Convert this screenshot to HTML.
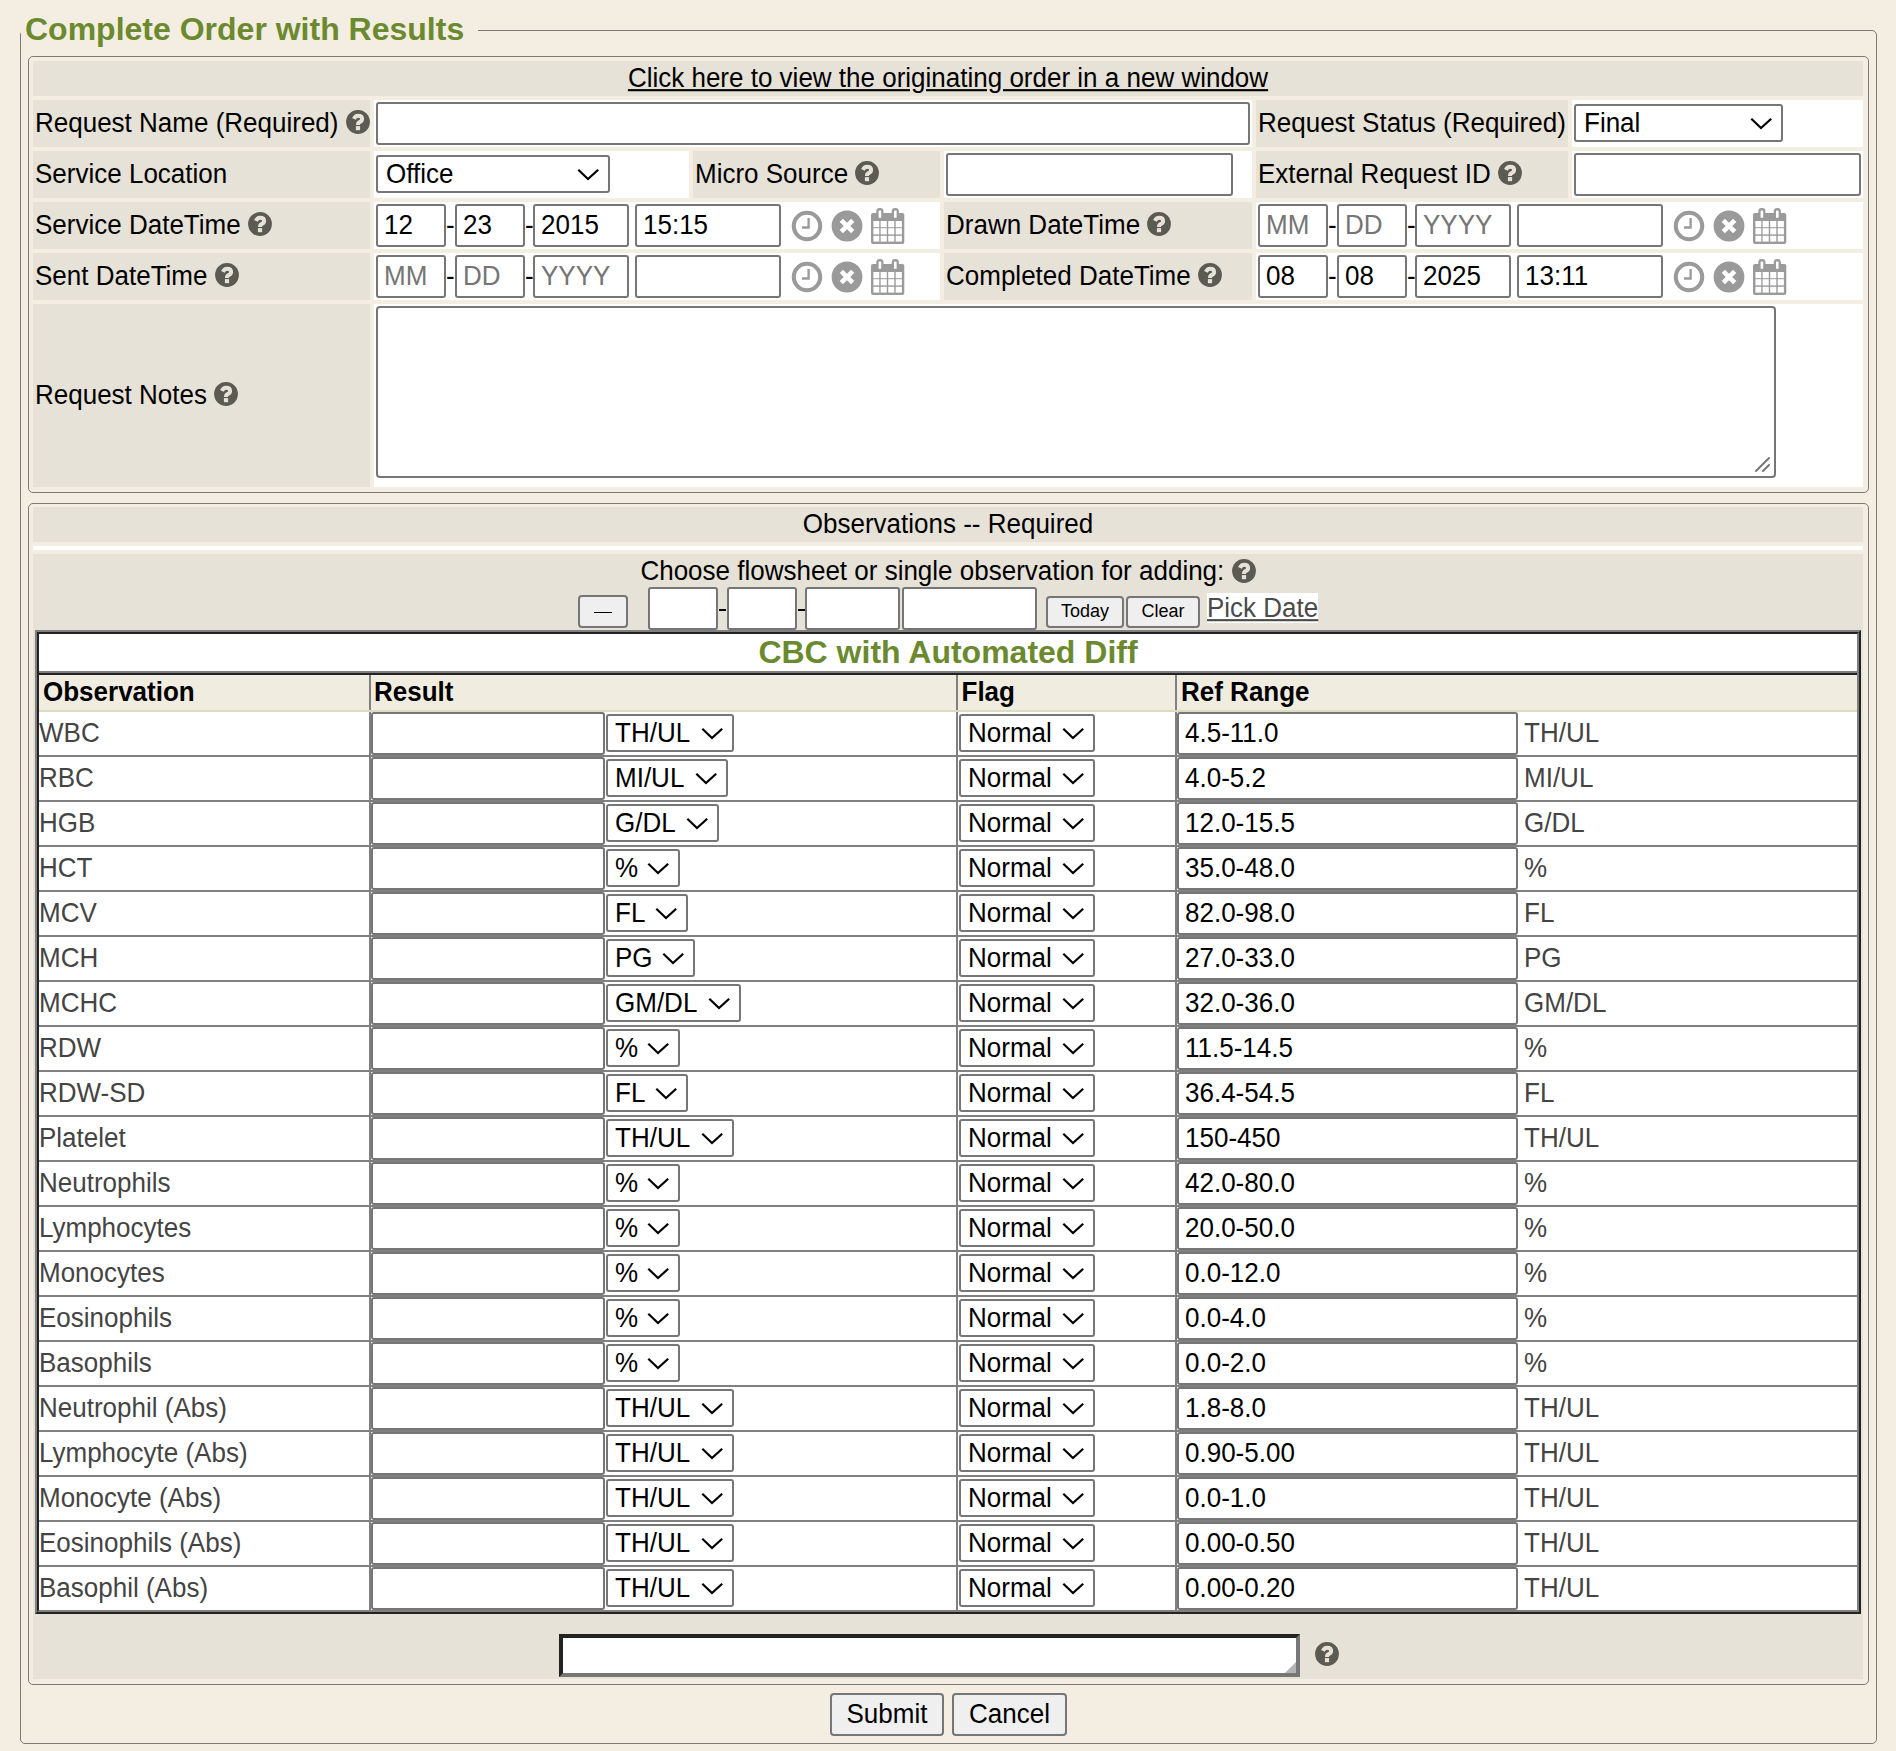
<!DOCTYPE html>
<html><head><meta charset="utf-8"><title>Complete Order with Results</title>
<style>
html,body{margin:0;padding:0;}
body{width:1896px;height:1751px;overflow:hidden;background:#f4eee2;position:relative;font-family:"Liberation Sans",sans-serif;font-size:26px;color:#000;}
body>div,body>svg{position:absolute;}
.t{white-space:nowrap;line-height:normal;}
.s{transform:scaleY(1.06);transform-origin:0 24px;}
</style></head><body>
<div style="left:20px;top:30px;width:1857px;height:1714px;box-sizing:border-box;border:1px solid #7a7a7a;border-radius:5px"></div>
<div style="left:21px;top:0px;width:457px;height:34px;background:#f4eee2"></div>
<div class="t" style="left:25px;top:11px;font-size:32px;font-weight:bold;color:#6b8a2f;">Complete Order with Results</div>
<div style="left:28px;top:56px;width:1841px;height:437px;box-sizing:border-box;border:1px solid #7a7a7a;border-radius:5px"></div>
<div style="left:33px;top:61px;width:1830px;height:35px;background:#e6e2d7"></div>
<div class="t s" style="left:33px;width:1830px;text-align:center;top:63px;text-decoration:underline">Click here to view the originating order in a new window</div>
<div style="left:33px;top:100px;width:337px;height:47px;background:#e6e2d7"></div>
<div class="t s" style="left:35px;top:108px;">Request Name (Required)</div>
<svg style="left:345.69000000000005px;top:109.9px" width="24" height="24" viewBox="0 0 24 24"><circle cx="12" cy="12" r="11.9" fill="#5b5a53"/><path d="M7.9 8.9 Q9.3 5.8 12.1 5.8 Q16.1 5.8 16.1 9.0 Q16.1 11.1 13.6 12.2 Q12 12.9 12 15.0" fill="none" stroke="#e6e2d7" stroke-width="4.0"/><rect x="9.9" y="16.1" width="4.2" height="4.1" fill="#e6e2d7"/></svg>
<div style="left:374px;top:100px;width:878px;height:47px;background:#fff"></div>
<div style="left:376px;top:102px;width:874px;height:43px;box-sizing:border-box;border:2px solid #767676;border-radius:3px;background:#fff"></div>
<div style="left:1256px;top:100px;width:312px;height:47px;background:#e6e2d7"></div>
<div class="t s" style="left:1258px;top:108px;">Request Status (Required)</div>
<div style="left:1572px;top:100px;width:291px;height:47px;background:#fff"></div>
<div style="left:1574px;top:104px;width:209px;height:38px;box-sizing:border-box;border:2px solid #767676;border-radius:3px;background:#fff"></div>
<div class="t s" style="left:1584px;top:108px;">Final</div>
<svg style="left:1747px;top:113.0px" width="30" height="20"><polyline points="4.300000000000001,5.8 14,15.1 24.2,5.8" fill="none" stroke="#000" stroke-width="2.2"/></svg>
<div style="left:33px;top:151px;width:337px;height:47px;background:#e6e2d7"></div>
<div class="t s" style="left:35px;top:159px;">Service Location</div>
<div style="left:374px;top:151px;width:315px;height:47px;background:#fff"></div>
<div style="left:376px;top:155px;width:234px;height:38px;box-sizing:border-box;border:2px solid #767676;border-radius:3px;background:#fff"></div>
<div class="t s" style="left:386px;top:159px;">Office</div>
<svg style="left:574px;top:164.0px" width="30" height="20"><polyline points="4.300000000000001,5.8 14,15.1 24.2,5.8" fill="none" stroke="#000" stroke-width="2.2"/></svg>
<div style="left:693px;top:151px;width:247px;height:47px;background:#e6e2d7"></div>
<div class="t s" style="left:695px;top:159px;">Micro Source</div>
<svg style="left:855.38px;top:160.9px" width="24" height="24" viewBox="0 0 24 24"><circle cx="12" cy="12" r="11.9" fill="#5b5a53"/><path d="M7.9 8.9 Q9.3 5.8 12.1 5.8 Q16.1 5.8 16.1 9.0 Q16.1 11.1 13.6 12.2 Q12 12.9 12 15.0" fill="none" stroke="#e6e2d7" stroke-width="4.0"/><rect x="9.9" y="16.1" width="4.2" height="4.1" fill="#e6e2d7"/></svg>
<div style="left:944px;top:151px;width:308px;height:47px;background:#fff"></div>
<div style="left:946px;top:153px;width:287px;height:43px;box-sizing:border-box;border:2px solid #767676;border-radius:3px;background:#fff"></div>
<div style="left:1256px;top:151px;width:312px;height:47px;background:#e6e2d7"></div>
<div class="t s" style="left:1258px;top:159px;">External Request ID</div>
<svg style="left:1497.89px;top:160.9px" width="24" height="24" viewBox="0 0 24 24"><circle cx="12" cy="12" r="11.9" fill="#5b5a53"/><path d="M7.9 8.9 Q9.3 5.8 12.1 5.8 Q16.1 5.8 16.1 9.0 Q16.1 11.1 13.6 12.2 Q12 12.9 12 15.0" fill="none" stroke="#e6e2d7" stroke-width="4.0"/><rect x="9.9" y="16.1" width="4.2" height="4.1" fill="#e6e2d7"/></svg>
<div style="left:1572px;top:151px;width:291px;height:47px;background:#fff"></div>
<div style="left:1574px;top:153px;width:287px;height:43px;box-sizing:border-box;border:2px solid #767676;border-radius:3px;background:#fff"></div>
<div style="left:33px;top:202px;width:337px;height:47px;background:#e6e2d7"></div>
<div class="t s" style="left:35px;top:210px;">Service DateTime</div>
<svg style="left:247.88px;top:211.9px" width="24" height="24" viewBox="0 0 24 24"><circle cx="12" cy="12" r="11.9" fill="#5b5a53"/><path d="M7.9 8.9 Q9.3 5.8 12.1 5.8 Q16.1 5.8 16.1 9.0 Q16.1 11.1 13.6 12.2 Q12 12.9 12 15.0" fill="none" stroke="#e6e2d7" stroke-width="4.0"/><rect x="9.9" y="16.1" width="4.2" height="4.1" fill="#e6e2d7"/></svg>
<div style="left:374px;top:202px;width:566px;height:47px;background:#fff"></div>
<div style="left:376px;top:204px;width:70px;height:43px;box-sizing:border-box;border:2px solid #767676;border-radius:3px;background:#fff"></div>
<div class="t s" style="left:384px;top:210px;">12</div>
<div style="left:455px;top:204px;width:70px;height:43px;box-sizing:border-box;border:2px solid #767676;border-radius:3px;background:#fff"></div>
<div class="t s" style="left:463px;top:210px;">23</div>
<div style="left:533px;top:204px;width:96px;height:43px;box-sizing:border-box;border:2px solid #767676;border-radius:3px;background:#fff"></div>
<div class="t s" style="left:541px;top:210px;">2015</div>
<div class="t s" style="left:446px;top:210px;">-</div>
<div class="t s" style="left:525px;top:210px;">-</div>
<div style="left:635px;top:204px;width:146px;height:43px;box-sizing:border-box;border:2px solid #767676;border-radius:3px;background:#fff"></div>
<div class="t s" style="left:643px;top:210px;">15:15</div>
<svg style="left:791.1px;top:210.1px" width="32" height="32" viewBox="0 0 32 32"><circle cx="16" cy="16" r="13.2" fill="none" stroke="#9a9a9a" stroke-width="4.1"/><path d="M17.6 8.1 V17.5 H11" fill="none" stroke="#9a9a9a" stroke-width="2.3"/></svg>
<svg style="left:831.4px;top:210.1px" width="32" height="32" viewBox="0 0 32 32"><circle cx="16" cy="16" r="15.4" fill="#9a9a9a"/><path d="M10.3 10.3 L21.7 21.7 M21.7 10.3 L10.3 21.7" stroke="#fff" stroke-width="4.6"/></svg>
<svg style="left:870.7px;top:207.9px" width="34" height="37" viewBox="0 0 34 37"><rect x="0" y="5" width="33.3" height="31" rx="2" fill="#9a9a9a"/><rect x="2.4" y="13" width="5.9" height="6.199999999999999" fill="#fff"/><rect x="2.4" y="20.2" width="5.9" height="6.199999999999999" fill="#fff"/><rect x="2.4" y="27.8" width="5.9" height="5.800000000000001" fill="#fff"/><rect x="9.6" y="13" width="6.200000000000001" height="6.199999999999999" fill="#fff"/><rect x="9.6" y="20.2" width="6.200000000000001" height="6.199999999999999" fill="#fff"/><rect x="9.6" y="27.8" width="6.200000000000001" height="5.800000000000001" fill="#fff"/><rect x="17.2" y="13" width="6.100000000000001" height="6.199999999999999" fill="#fff"/><rect x="17.2" y="20.2" width="6.100000000000001" height="6.199999999999999" fill="#fff"/><rect x="17.2" y="27.8" width="6.100000000000001" height="5.800000000000001" fill="#fff"/><rect x="24.7" y="13" width="6.199999999999999" height="6.199999999999999" fill="#fff"/><rect x="24.7" y="20.2" width="6.199999999999999" height="6.199999999999999" fill="#fff"/><rect x="24.7" y="27.8" width="6.199999999999999" height="5.800000000000001" fill="#fff"/><rect x="5.300000000000001" y="0" width="7.2" height="11" rx="3.4" fill="#9a9a9a"/><rect x="7.6000000000000005" y="2.6" width="2.6" height="7.2" fill="#fff"/><rect x="20.7" y="0" width="7.2" height="11" rx="3.4" fill="#9a9a9a"/><rect x="23.0" y="2.6" width="2.6" height="7.2" fill="#fff"/></svg>
<div style="left:944px;top:202px;width:308px;height:47px;background:#e6e2d7"></div>
<div class="t s" style="left:946px;top:210px;">Drawn DateTime</div>
<svg style="left:1147.31px;top:211.9px" width="24" height="24" viewBox="0 0 24 24"><circle cx="12" cy="12" r="11.9" fill="#5b5a53"/><path d="M7.9 8.9 Q9.3 5.8 12.1 5.8 Q16.1 5.8 16.1 9.0 Q16.1 11.1 13.6 12.2 Q12 12.9 12 15.0" fill="none" stroke="#e6e2d7" stroke-width="4.0"/><rect x="9.9" y="16.1" width="4.2" height="4.1" fill="#e6e2d7"/></svg>
<div style="left:1256px;top:202px;width:607px;height:47px;background:#fff"></div>
<div style="left:1258px;top:204px;width:70px;height:43px;box-sizing:border-box;border:2px solid #767676;border-radius:3px;background:#fff"></div>
<div class="t s" style="left:1266px;top:210px;color:#757575;">MM</div>
<div style="left:1337px;top:204px;width:70px;height:43px;box-sizing:border-box;border:2px solid #767676;border-radius:3px;background:#fff"></div>
<div class="t s" style="left:1345px;top:210px;color:#757575;">DD</div>
<div style="left:1415px;top:204px;width:96px;height:43px;box-sizing:border-box;border:2px solid #767676;border-radius:3px;background:#fff"></div>
<div class="t s" style="left:1423px;top:210px;color:#757575;">YYYY</div>
<div class="t s" style="left:1328px;top:210px;">-</div>
<div class="t s" style="left:1407px;top:210px;">-</div>
<div style="left:1517px;top:204px;width:146px;height:43px;box-sizing:border-box;border:2px solid #767676;border-radius:3px;background:#fff"></div>
<svg style="left:1673.1px;top:210.1px" width="32" height="32" viewBox="0 0 32 32"><circle cx="16" cy="16" r="13.2" fill="none" stroke="#9a9a9a" stroke-width="4.1"/><path d="M17.6 8.1 V17.5 H11" fill="none" stroke="#9a9a9a" stroke-width="2.3"/></svg>
<svg style="left:1713.4px;top:210.1px" width="32" height="32" viewBox="0 0 32 32"><circle cx="16" cy="16" r="15.4" fill="#9a9a9a"/><path d="M10.3 10.3 L21.7 21.7 M21.7 10.3 L10.3 21.7" stroke="#fff" stroke-width="4.6"/></svg>
<svg style="left:1752.7px;top:207.9px" width="34" height="37" viewBox="0 0 34 37"><rect x="0" y="5" width="33.3" height="31" rx="2" fill="#9a9a9a"/><rect x="2.4" y="13" width="5.9" height="6.199999999999999" fill="#fff"/><rect x="2.4" y="20.2" width="5.9" height="6.199999999999999" fill="#fff"/><rect x="2.4" y="27.8" width="5.9" height="5.800000000000001" fill="#fff"/><rect x="9.6" y="13" width="6.200000000000001" height="6.199999999999999" fill="#fff"/><rect x="9.6" y="20.2" width="6.200000000000001" height="6.199999999999999" fill="#fff"/><rect x="9.6" y="27.8" width="6.200000000000001" height="5.800000000000001" fill="#fff"/><rect x="17.2" y="13" width="6.100000000000001" height="6.199999999999999" fill="#fff"/><rect x="17.2" y="20.2" width="6.100000000000001" height="6.199999999999999" fill="#fff"/><rect x="17.2" y="27.8" width="6.100000000000001" height="5.800000000000001" fill="#fff"/><rect x="24.7" y="13" width="6.199999999999999" height="6.199999999999999" fill="#fff"/><rect x="24.7" y="20.2" width="6.199999999999999" height="6.199999999999999" fill="#fff"/><rect x="24.7" y="27.8" width="6.199999999999999" height="5.800000000000001" fill="#fff"/><rect x="5.300000000000001" y="0" width="7.2" height="11" rx="3.4" fill="#9a9a9a"/><rect x="7.6000000000000005" y="2.6" width="2.6" height="7.2" fill="#fff"/><rect x="20.7" y="0" width="7.2" height="11" rx="3.4" fill="#9a9a9a"/><rect x="23.0" y="2.6" width="2.6" height="7.2" fill="#fff"/></svg>
<div style="left:33px;top:253px;width:337px;height:47px;background:#e6e2d7"></div>
<div class="t s" style="left:35px;top:261px;">Sent DateTime</div>
<svg style="left:214.67px;top:262.9px" width="24" height="24" viewBox="0 0 24 24"><circle cx="12" cy="12" r="11.9" fill="#5b5a53"/><path d="M7.9 8.9 Q9.3 5.8 12.1 5.8 Q16.1 5.8 16.1 9.0 Q16.1 11.1 13.6 12.2 Q12 12.9 12 15.0" fill="none" stroke="#e6e2d7" stroke-width="4.0"/><rect x="9.9" y="16.1" width="4.2" height="4.1" fill="#e6e2d7"/></svg>
<div style="left:374px;top:253px;width:566px;height:47px;background:#fff"></div>
<div style="left:376px;top:255px;width:70px;height:43px;box-sizing:border-box;border:2px solid #767676;border-radius:3px;background:#fff"></div>
<div class="t s" style="left:384px;top:261px;color:#757575;">MM</div>
<div style="left:455px;top:255px;width:70px;height:43px;box-sizing:border-box;border:2px solid #767676;border-radius:3px;background:#fff"></div>
<div class="t s" style="left:463px;top:261px;color:#757575;">DD</div>
<div style="left:533px;top:255px;width:96px;height:43px;box-sizing:border-box;border:2px solid #767676;border-radius:3px;background:#fff"></div>
<div class="t s" style="left:541px;top:261px;color:#757575;">YYYY</div>
<div class="t s" style="left:446px;top:261px;">-</div>
<div class="t s" style="left:525px;top:261px;">-</div>
<div style="left:635px;top:255px;width:146px;height:43px;box-sizing:border-box;border:2px solid #767676;border-radius:3px;background:#fff"></div>
<svg style="left:791.1px;top:261.1px" width="32" height="32" viewBox="0 0 32 32"><circle cx="16" cy="16" r="13.2" fill="none" stroke="#9a9a9a" stroke-width="4.1"/><path d="M17.6 8.1 V17.5 H11" fill="none" stroke="#9a9a9a" stroke-width="2.3"/></svg>
<svg style="left:831.4px;top:261.1px" width="32" height="32" viewBox="0 0 32 32"><circle cx="16" cy="16" r="15.4" fill="#9a9a9a"/><path d="M10.3 10.3 L21.7 21.7 M21.7 10.3 L10.3 21.7" stroke="#fff" stroke-width="4.6"/></svg>
<svg style="left:870.7px;top:258.9px" width="34" height="37" viewBox="0 0 34 37"><rect x="0" y="5" width="33.3" height="31" rx="2" fill="#9a9a9a"/><rect x="2.4" y="13" width="5.9" height="6.199999999999999" fill="#fff"/><rect x="2.4" y="20.2" width="5.9" height="6.199999999999999" fill="#fff"/><rect x="2.4" y="27.8" width="5.9" height="5.800000000000001" fill="#fff"/><rect x="9.6" y="13" width="6.200000000000001" height="6.199999999999999" fill="#fff"/><rect x="9.6" y="20.2" width="6.200000000000001" height="6.199999999999999" fill="#fff"/><rect x="9.6" y="27.8" width="6.200000000000001" height="5.800000000000001" fill="#fff"/><rect x="17.2" y="13" width="6.100000000000001" height="6.199999999999999" fill="#fff"/><rect x="17.2" y="20.2" width="6.100000000000001" height="6.199999999999999" fill="#fff"/><rect x="17.2" y="27.8" width="6.100000000000001" height="5.800000000000001" fill="#fff"/><rect x="24.7" y="13" width="6.199999999999999" height="6.199999999999999" fill="#fff"/><rect x="24.7" y="20.2" width="6.199999999999999" height="6.199999999999999" fill="#fff"/><rect x="24.7" y="27.8" width="6.199999999999999" height="5.800000000000001" fill="#fff"/><rect x="5.300000000000001" y="0" width="7.2" height="11" rx="3.4" fill="#9a9a9a"/><rect x="7.6000000000000005" y="2.6" width="2.6" height="7.2" fill="#fff"/><rect x="20.7" y="0" width="7.2" height="11" rx="3.4" fill="#9a9a9a"/><rect x="23.0" y="2.6" width="2.6" height="7.2" fill="#fff"/></svg>
<div style="left:944px;top:253px;width:308px;height:47px;background:#e6e2d7"></div>
<div class="t s" style="left:946px;top:261px;">Completed DateTime</div>
<svg style="left:1197.92px;top:262.9px" width="24" height="24" viewBox="0 0 24 24"><circle cx="12" cy="12" r="11.9" fill="#5b5a53"/><path d="M7.9 8.9 Q9.3 5.8 12.1 5.8 Q16.1 5.8 16.1 9.0 Q16.1 11.1 13.6 12.2 Q12 12.9 12 15.0" fill="none" stroke="#e6e2d7" stroke-width="4.0"/><rect x="9.9" y="16.1" width="4.2" height="4.1" fill="#e6e2d7"/></svg>
<div style="left:1256px;top:253px;width:607px;height:47px;background:#fff"></div>
<div style="left:1258px;top:255px;width:70px;height:43px;box-sizing:border-box;border:2px solid #767676;border-radius:3px;background:#fff"></div>
<div class="t s" style="left:1266px;top:261px;">08</div>
<div style="left:1337px;top:255px;width:70px;height:43px;box-sizing:border-box;border:2px solid #767676;border-radius:3px;background:#fff"></div>
<div class="t s" style="left:1345px;top:261px;">08</div>
<div style="left:1415px;top:255px;width:96px;height:43px;box-sizing:border-box;border:2px solid #767676;border-radius:3px;background:#fff"></div>
<div class="t s" style="left:1423px;top:261px;">2025</div>
<div class="t s" style="left:1328px;top:261px;">-</div>
<div class="t s" style="left:1407px;top:261px;">-</div>
<div style="left:1517px;top:255px;width:146px;height:43px;box-sizing:border-box;border:2px solid #767676;border-radius:3px;background:#fff"></div>
<div class="t s" style="left:1525px;top:261px;">13:11</div>
<svg style="left:1673.1px;top:261.1px" width="32" height="32" viewBox="0 0 32 32"><circle cx="16" cy="16" r="13.2" fill="none" stroke="#9a9a9a" stroke-width="4.1"/><path d="M17.6 8.1 V17.5 H11" fill="none" stroke="#9a9a9a" stroke-width="2.3"/></svg>
<svg style="left:1713.4px;top:261.1px" width="32" height="32" viewBox="0 0 32 32"><circle cx="16" cy="16" r="15.4" fill="#9a9a9a"/><path d="M10.3 10.3 L21.7 21.7 M21.7 10.3 L10.3 21.7" stroke="#fff" stroke-width="4.6"/></svg>
<svg style="left:1752.7px;top:258.9px" width="34" height="37" viewBox="0 0 34 37"><rect x="0" y="5" width="33.3" height="31" rx="2" fill="#9a9a9a"/><rect x="2.4" y="13" width="5.9" height="6.199999999999999" fill="#fff"/><rect x="2.4" y="20.2" width="5.9" height="6.199999999999999" fill="#fff"/><rect x="2.4" y="27.8" width="5.9" height="5.800000000000001" fill="#fff"/><rect x="9.6" y="13" width="6.200000000000001" height="6.199999999999999" fill="#fff"/><rect x="9.6" y="20.2" width="6.200000000000001" height="6.199999999999999" fill="#fff"/><rect x="9.6" y="27.8" width="6.200000000000001" height="5.800000000000001" fill="#fff"/><rect x="17.2" y="13" width="6.100000000000001" height="6.199999999999999" fill="#fff"/><rect x="17.2" y="20.2" width="6.100000000000001" height="6.199999999999999" fill="#fff"/><rect x="17.2" y="27.8" width="6.100000000000001" height="5.800000000000001" fill="#fff"/><rect x="24.7" y="13" width="6.199999999999999" height="6.199999999999999" fill="#fff"/><rect x="24.7" y="20.2" width="6.199999999999999" height="6.199999999999999" fill="#fff"/><rect x="24.7" y="27.8" width="6.199999999999999" height="5.800000000000001" fill="#fff"/><rect x="5.300000000000001" y="0" width="7.2" height="11" rx="3.4" fill="#9a9a9a"/><rect x="7.6000000000000005" y="2.6" width="2.6" height="7.2" fill="#fff"/><rect x="20.7" y="0" width="7.2" height="11" rx="3.4" fill="#9a9a9a"/><rect x="23.0" y="2.6" width="2.6" height="7.2" fill="#fff"/></svg>
<div style="left:33px;top:304px;width:337px;height:183px;background:#e6e2d7"></div>
<div class="t s" style="left:35px;top:380px;">Request Notes</div>
<svg style="left:214.2px;top:381.9px" width="24" height="24" viewBox="0 0 24 24"><circle cx="12" cy="12" r="11.9" fill="#5b5a53"/><path d="M7.9 8.9 Q9.3 5.8 12.1 5.8 Q16.1 5.8 16.1 9.0 Q16.1 11.1 13.6 12.2 Q12 12.9 12 15.0" fill="none" stroke="#e6e2d7" stroke-width="4.0"/><rect x="9.9" y="16.1" width="4.2" height="4.1" fill="#e6e2d7"/></svg>
<div style="left:374px;top:304px;width:1489px;height:183px;background:#fff"></div>
<div style="left:376px;top:306px;width:1400px;height:172px;box-sizing:border-box;border:2px solid #767676;border-radius:4px;background:#fff"></div>
<svg style="left:1752px;top:454px" width="20" height="20"><path d="M4 17 L17 4 M11 17 L17 11" stroke="#767676" stroke-width="2" stroke-linecap="round"/></svg>
<div style="left:28px;top:503px;width:1841px;height:1182px;box-sizing:border-box;border:1px solid #7a7a7a;border-radius:5px"></div>
<div style="left:33px;top:507px;width:1830px;height:35px;background:#e6e2d7"></div>
<div class="t s" style="left:33px;width:1830px;text-align:center;top:509px">Observations -- Required</div>
<div style="left:33px;top:546px;width:1830px;height:4px;background:#fff"></div>
<div style="left:33px;top:554px;width:1830px;height:1125px;background:#e6e2d7"></div>
<div class="t s" style="left:640.4px;top:556px;">Choose flowsheet or single observation for adding:</div>
<svg style="left:1231.5px;top:558.5px" width="24" height="24" viewBox="0 0 24 24"><circle cx="12" cy="12" r="11.9" fill="#5b5a53"/><path d="M7.9 8.9 Q9.3 5.8 12.1 5.8 Q16.1 5.8 16.1 9.0 Q16.1 11.1 13.6 12.2 Q12 12.9 12 15.0" fill="none" stroke="#e6e2d7" stroke-width="4.0"/><rect x="9.9" y="16.1" width="4.2" height="4.1" fill="#e6e2d7"/></svg>
<div style="left:578px;top:595px;width:50px;height:33px;box-sizing:border-box;border:2px solid #767676;border-radius:4px;background:#efefef"></div>
<div style="left:593.6px;top:611.6px;width:18.4px;height:1.2px;background:#000"></div>
<div style="left:648px;top:587px;width:70px;height:43px;box-sizing:border-box;border:2px solid #767676;border-radius:3px;background:#fff"></div>
<div style="left:718.5px;top:609px;width:7.3px;height:2.2px;background:#000"></div>
<div style="left:727px;top:587px;width:70px;height:43px;box-sizing:border-box;border:2px solid #767676;border-radius:3px;background:#fff"></div>
<div style="left:797.5px;top:609px;width:7.3px;height:2.2px;background:#000"></div>
<div style="left:805px;top:587px;width:95px;height:43px;box-sizing:border-box;border:2px solid #767676;border-radius:3px;background:#fff"></div>
<div style="left:902px;top:587px;width:135px;height:43px;box-sizing:border-box;border:2px solid #767676;border-radius:3px;background:#fff"></div>
<div style="left:1046px;top:596px;width:78px;height:32px;box-sizing:border-box;border:2px solid #767676;border-radius:4px;background:#efefef"></div>
<div class="t" style="left:1060.975px;top:601px;font-size:18px;">Today</div>
<div style="left:1126px;top:596px;width:74px;height:32px;box-sizing:border-box;border:2px solid #767676;border-radius:4px;background:#efefef"></div>
<div class="t" style="left:1141.49px;top:601px;font-size:18px;">Clear</div>
<div style="left:1207px;top:593px;width:111px;height:30px;background:#fff"></div>
<div class="t s" style="left:1207px;top:593px;color:#4a4a4a;text-decoration:underline">Pick Date</div>
<div style="left:35px;top:630px;width:1826px;height:984px;box-sizing:border-box;border-style:solid;border-width:2px;border-color:#808080 #232323 #232323 #808080;background:#fff"></div>
<div style="left:37px;top:632px;width:1822px;height:980px;box-sizing:border-box;border-style:solid;border-width:2px;border-color:#232323 #808080 #808080 #232323"></div>
<div class="t" style="left:39px;width:1818px;text-align:center;top:634px;font-size:32px;font-weight:bold;color:#6b8a2f">CBC with Automated Diff</div>
<div style="left:39px;top:671px;width:1818px;height:2px;background:#808080"></div>
<div style="left:39px;top:673px;width:1818px;height:2px;background:#232323"></div>
<div style="left:39px;top:675px;width:1818px;height:35px;background:#f0ede0"></div>
<div style="left:39px;top:710px;width:1818px;height:2px;background:#dcdcbf"></div>
<div style="left:369px;top:675px;width:2px;height:35px;background:#808080"></div>
<div style="left:956px;top:675px;width:2px;height:35px;background:#808080"></div>
<div style="left:1175px;top:675px;width:2px;height:35px;background:#808080"></div>
<div class="t s" style="left:43px;top:677px;font-weight:bold;">Observation</div>
<div class="t s" style="left:374px;top:677px;font-weight:bold;">Result</div>
<div class="t s" style="left:961.5px;top:677px;font-weight:bold;">Flag</div>
<div class="t s" style="left:1181px;top:677px;font-weight:bold;">Ref Range</div>
<div style="left:369px;top:712px;width:2px;height:898px;background:#808080"></div>
<div style="left:956px;top:712px;width:2px;height:898px;background:#808080"></div>
<div style="left:1175px;top:712px;width:2px;height:898px;background:#808080"></div>
<div style="left:39px;top:755px;width:1818px;height:2px;background:#808080"></div>
<div class="t s" style="left:39px;top:718px;color:#444444;">WBC</div>
<div style="left:371px;top:712px;width:234px;height:43px;box-sizing:border-box;border:2px solid #767676;border-radius:3px;background:#fff"></div>
<div style="left:606px;top:714px;width:128px;height:38px;box-sizing:border-box;border:2px solid #767676;border-radius:3px;background:#fff"></div>
<div class="t s" style="left:615px;top:718px;">TH/UL</div>
<svg style="left:698px;top:723.0px" width="30" height="20"><polyline points="4.300000000000001,5.8 14,15.1 24.2,5.8" fill="none" stroke="#000" stroke-width="2.2"/></svg>
<div style="left:959px;top:714px;width:136px;height:38px;box-sizing:border-box;border:2px solid #767676;border-radius:3px;background:#fff"></div>
<div class="t s" style="left:968px;top:718px;">Normal</div>
<svg style="left:1059px;top:723.0px" width="30" height="20"><polyline points="4.300000000000001,5.8 14,15.1 24.2,5.8" fill="none" stroke="#000" stroke-width="2.2"/></svg>
<div style="left:1177px;top:712px;width:341px;height:43px;box-sizing:border-box;border:2px solid #767676;border-radius:3px;background:#fff"></div>
<div class="t s" style="left:1185px;top:718px;">4.5-11.0</div>
<div class="t s" style="left:1524px;top:718px;color:#444444;">TH/UL</div>
<div style="left:39px;top:800px;width:1818px;height:2px;background:#808080"></div>
<div class="t s" style="left:39px;top:763px;color:#444444;">RBC</div>
<div style="left:371px;top:757px;width:234px;height:43px;box-sizing:border-box;border:2px solid #767676;border-radius:3px;background:#fff"></div>
<div style="left:606px;top:759px;width:122px;height:38px;box-sizing:border-box;border:2px solid #767676;border-radius:3px;background:#fff"></div>
<div class="t s" style="left:615px;top:763px;">MI/UL</div>
<svg style="left:692px;top:768.0px" width="30" height="20"><polyline points="4.300000000000001,5.8 14,15.1 24.2,5.8" fill="none" stroke="#000" stroke-width="2.2"/></svg>
<div style="left:959px;top:759px;width:136px;height:38px;box-sizing:border-box;border:2px solid #767676;border-radius:3px;background:#fff"></div>
<div class="t s" style="left:968px;top:763px;">Normal</div>
<svg style="left:1059px;top:768.0px" width="30" height="20"><polyline points="4.300000000000001,5.8 14,15.1 24.2,5.8" fill="none" stroke="#000" stroke-width="2.2"/></svg>
<div style="left:1177px;top:757px;width:341px;height:43px;box-sizing:border-box;border:2px solid #767676;border-radius:3px;background:#fff"></div>
<div class="t s" style="left:1185px;top:763px;">4.0-5.2</div>
<div class="t s" style="left:1524px;top:763px;color:#444444;">MI/UL</div>
<div style="left:39px;top:845px;width:1818px;height:2px;background:#808080"></div>
<div class="t s" style="left:39px;top:808px;color:#444444;">HGB</div>
<div style="left:371px;top:802px;width:234px;height:43px;box-sizing:border-box;border:2px solid #767676;border-radius:3px;background:#fff"></div>
<div style="left:606px;top:804px;width:113px;height:38px;box-sizing:border-box;border:2px solid #767676;border-radius:3px;background:#fff"></div>
<div class="t s" style="left:615px;top:808px;">G/DL</div>
<svg style="left:683px;top:813.0px" width="30" height="20"><polyline points="4.300000000000001,5.8 14,15.1 24.2,5.8" fill="none" stroke="#000" stroke-width="2.2"/></svg>
<div style="left:959px;top:804px;width:136px;height:38px;box-sizing:border-box;border:2px solid #767676;border-radius:3px;background:#fff"></div>
<div class="t s" style="left:968px;top:808px;">Normal</div>
<svg style="left:1059px;top:813.0px" width="30" height="20"><polyline points="4.300000000000001,5.8 14,15.1 24.2,5.8" fill="none" stroke="#000" stroke-width="2.2"/></svg>
<div style="left:1177px;top:802px;width:341px;height:43px;box-sizing:border-box;border:2px solid #767676;border-radius:3px;background:#fff"></div>
<div class="t s" style="left:1185px;top:808px;">12.0-15.5</div>
<div class="t s" style="left:1524px;top:808px;color:#444444;">G/DL</div>
<div style="left:39px;top:890px;width:1818px;height:2px;background:#808080"></div>
<div class="t s" style="left:39px;top:853px;color:#444444;">HCT</div>
<div style="left:371px;top:847px;width:234px;height:43px;box-sizing:border-box;border:2px solid #767676;border-radius:3px;background:#fff"></div>
<div style="left:606px;top:849px;width:74px;height:38px;box-sizing:border-box;border:2px solid #767676;border-radius:3px;background:#fff"></div>
<div class="t s" style="left:615px;top:853px;">%</div>
<svg style="left:644px;top:858.0px" width="30" height="20"><polyline points="4.300000000000001,5.8 14,15.1 24.2,5.8" fill="none" stroke="#000" stroke-width="2.2"/></svg>
<div style="left:959px;top:849px;width:136px;height:38px;box-sizing:border-box;border:2px solid #767676;border-radius:3px;background:#fff"></div>
<div class="t s" style="left:968px;top:853px;">Normal</div>
<svg style="left:1059px;top:858.0px" width="30" height="20"><polyline points="4.300000000000001,5.8 14,15.1 24.2,5.8" fill="none" stroke="#000" stroke-width="2.2"/></svg>
<div style="left:1177px;top:847px;width:341px;height:43px;box-sizing:border-box;border:2px solid #767676;border-radius:3px;background:#fff"></div>
<div class="t s" style="left:1185px;top:853px;">35.0-48.0</div>
<div class="t s" style="left:1524px;top:853px;color:#444444;">%</div>
<div style="left:39px;top:935px;width:1818px;height:2px;background:#808080"></div>
<div class="t s" style="left:39px;top:898px;color:#444444;">MCV</div>
<div style="left:371px;top:892px;width:234px;height:43px;box-sizing:border-box;border:2px solid #767676;border-radius:3px;background:#fff"></div>
<div style="left:606px;top:894px;width:82px;height:38px;box-sizing:border-box;border:2px solid #767676;border-radius:3px;background:#fff"></div>
<div class="t s" style="left:615px;top:898px;">FL</div>
<svg style="left:652px;top:903.0px" width="30" height="20"><polyline points="4.300000000000001,5.8 14,15.1 24.2,5.8" fill="none" stroke="#000" stroke-width="2.2"/></svg>
<div style="left:959px;top:894px;width:136px;height:38px;box-sizing:border-box;border:2px solid #767676;border-radius:3px;background:#fff"></div>
<div class="t s" style="left:968px;top:898px;">Normal</div>
<svg style="left:1059px;top:903.0px" width="30" height="20"><polyline points="4.300000000000001,5.8 14,15.1 24.2,5.8" fill="none" stroke="#000" stroke-width="2.2"/></svg>
<div style="left:1177px;top:892px;width:341px;height:43px;box-sizing:border-box;border:2px solid #767676;border-radius:3px;background:#fff"></div>
<div class="t s" style="left:1185px;top:898px;">82.0-98.0</div>
<div class="t s" style="left:1524px;top:898px;color:#444444;">FL</div>
<div style="left:39px;top:980px;width:1818px;height:2px;background:#808080"></div>
<div class="t s" style="left:39px;top:943px;color:#444444;">MCH</div>
<div style="left:371px;top:937px;width:234px;height:43px;box-sizing:border-box;border:2px solid #767676;border-radius:3px;background:#fff"></div>
<div style="left:606px;top:939px;width:89px;height:38px;box-sizing:border-box;border:2px solid #767676;border-radius:3px;background:#fff"></div>
<div class="t s" style="left:615px;top:943px;">PG</div>
<svg style="left:659px;top:948.0px" width="30" height="20"><polyline points="4.300000000000001,5.8 14,15.1 24.2,5.8" fill="none" stroke="#000" stroke-width="2.2"/></svg>
<div style="left:959px;top:939px;width:136px;height:38px;box-sizing:border-box;border:2px solid #767676;border-radius:3px;background:#fff"></div>
<div class="t s" style="left:968px;top:943px;">Normal</div>
<svg style="left:1059px;top:948.0px" width="30" height="20"><polyline points="4.300000000000001,5.8 14,15.1 24.2,5.8" fill="none" stroke="#000" stroke-width="2.2"/></svg>
<div style="left:1177px;top:937px;width:341px;height:43px;box-sizing:border-box;border:2px solid #767676;border-radius:3px;background:#fff"></div>
<div class="t s" style="left:1185px;top:943px;">27.0-33.0</div>
<div class="t s" style="left:1524px;top:943px;color:#444444;">PG</div>
<div style="left:39px;top:1025px;width:1818px;height:2px;background:#808080"></div>
<div class="t s" style="left:39px;top:988px;color:#444444;">MCHC</div>
<div style="left:371px;top:982px;width:234px;height:43px;box-sizing:border-box;border:2px solid #767676;border-radius:3px;background:#fff"></div>
<div style="left:606px;top:984px;width:135px;height:38px;box-sizing:border-box;border:2px solid #767676;border-radius:3px;background:#fff"></div>
<div class="t s" style="left:615px;top:988px;">GM/DL</div>
<svg style="left:705px;top:993.0px" width="30" height="20"><polyline points="4.300000000000001,5.8 14,15.1 24.2,5.8" fill="none" stroke="#000" stroke-width="2.2"/></svg>
<div style="left:959px;top:984px;width:136px;height:38px;box-sizing:border-box;border:2px solid #767676;border-radius:3px;background:#fff"></div>
<div class="t s" style="left:968px;top:988px;">Normal</div>
<svg style="left:1059px;top:993.0px" width="30" height="20"><polyline points="4.300000000000001,5.8 14,15.1 24.2,5.8" fill="none" stroke="#000" stroke-width="2.2"/></svg>
<div style="left:1177px;top:982px;width:341px;height:43px;box-sizing:border-box;border:2px solid #767676;border-radius:3px;background:#fff"></div>
<div class="t s" style="left:1185px;top:988px;">32.0-36.0</div>
<div class="t s" style="left:1524px;top:988px;color:#444444;">GM/DL</div>
<div style="left:39px;top:1070px;width:1818px;height:2px;background:#808080"></div>
<div class="t s" style="left:39px;top:1033px;color:#444444;">RDW</div>
<div style="left:371px;top:1027px;width:234px;height:43px;box-sizing:border-box;border:2px solid #767676;border-radius:3px;background:#fff"></div>
<div style="left:606px;top:1029px;width:74px;height:38px;box-sizing:border-box;border:2px solid #767676;border-radius:3px;background:#fff"></div>
<div class="t s" style="left:615px;top:1033px;">%</div>
<svg style="left:644px;top:1038.0px" width="30" height="20"><polyline points="4.300000000000001,5.8 14,15.1 24.2,5.8" fill="none" stroke="#000" stroke-width="2.2"/></svg>
<div style="left:959px;top:1029px;width:136px;height:38px;box-sizing:border-box;border:2px solid #767676;border-radius:3px;background:#fff"></div>
<div class="t s" style="left:968px;top:1033px;">Normal</div>
<svg style="left:1059px;top:1038.0px" width="30" height="20"><polyline points="4.300000000000001,5.8 14,15.1 24.2,5.8" fill="none" stroke="#000" stroke-width="2.2"/></svg>
<div style="left:1177px;top:1027px;width:341px;height:43px;box-sizing:border-box;border:2px solid #767676;border-radius:3px;background:#fff"></div>
<div class="t s" style="left:1185px;top:1033px;">11.5-14.5</div>
<div class="t s" style="left:1524px;top:1033px;color:#444444;">%</div>
<div style="left:39px;top:1115px;width:1818px;height:2px;background:#808080"></div>
<div class="t s" style="left:39px;top:1078px;color:#444444;">RDW-SD</div>
<div style="left:371px;top:1072px;width:234px;height:43px;box-sizing:border-box;border:2px solid #767676;border-radius:3px;background:#fff"></div>
<div style="left:606px;top:1074px;width:82px;height:38px;box-sizing:border-box;border:2px solid #767676;border-radius:3px;background:#fff"></div>
<div class="t s" style="left:615px;top:1078px;">FL</div>
<svg style="left:652px;top:1083.0px" width="30" height="20"><polyline points="4.300000000000001,5.8 14,15.1 24.2,5.8" fill="none" stroke="#000" stroke-width="2.2"/></svg>
<div style="left:959px;top:1074px;width:136px;height:38px;box-sizing:border-box;border:2px solid #767676;border-radius:3px;background:#fff"></div>
<div class="t s" style="left:968px;top:1078px;">Normal</div>
<svg style="left:1059px;top:1083.0px" width="30" height="20"><polyline points="4.300000000000001,5.8 14,15.1 24.2,5.8" fill="none" stroke="#000" stroke-width="2.2"/></svg>
<div style="left:1177px;top:1072px;width:341px;height:43px;box-sizing:border-box;border:2px solid #767676;border-radius:3px;background:#fff"></div>
<div class="t s" style="left:1185px;top:1078px;">36.4-54.5</div>
<div class="t s" style="left:1524px;top:1078px;color:#444444;">FL</div>
<div style="left:39px;top:1160px;width:1818px;height:2px;background:#808080"></div>
<div class="t s" style="left:39px;top:1123px;color:#444444;">Platelet</div>
<div style="left:371px;top:1117px;width:234px;height:43px;box-sizing:border-box;border:2px solid #767676;border-radius:3px;background:#fff"></div>
<div style="left:606px;top:1119px;width:128px;height:38px;box-sizing:border-box;border:2px solid #767676;border-radius:3px;background:#fff"></div>
<div class="t s" style="left:615px;top:1123px;">TH/UL</div>
<svg style="left:698px;top:1128.0px" width="30" height="20"><polyline points="4.300000000000001,5.8 14,15.1 24.2,5.8" fill="none" stroke="#000" stroke-width="2.2"/></svg>
<div style="left:959px;top:1119px;width:136px;height:38px;box-sizing:border-box;border:2px solid #767676;border-radius:3px;background:#fff"></div>
<div class="t s" style="left:968px;top:1123px;">Normal</div>
<svg style="left:1059px;top:1128.0px" width="30" height="20"><polyline points="4.300000000000001,5.8 14,15.1 24.2,5.8" fill="none" stroke="#000" stroke-width="2.2"/></svg>
<div style="left:1177px;top:1117px;width:341px;height:43px;box-sizing:border-box;border:2px solid #767676;border-radius:3px;background:#fff"></div>
<div class="t s" style="left:1185px;top:1123px;">150-450</div>
<div class="t s" style="left:1524px;top:1123px;color:#444444;">TH/UL</div>
<div style="left:39px;top:1205px;width:1818px;height:2px;background:#808080"></div>
<div class="t s" style="left:39px;top:1168px;color:#444444;">Neutrophils</div>
<div style="left:371px;top:1162px;width:234px;height:43px;box-sizing:border-box;border:2px solid #767676;border-radius:3px;background:#fff"></div>
<div style="left:606px;top:1164px;width:74px;height:38px;box-sizing:border-box;border:2px solid #767676;border-radius:3px;background:#fff"></div>
<div class="t s" style="left:615px;top:1168px;">%</div>
<svg style="left:644px;top:1173.0px" width="30" height="20"><polyline points="4.300000000000001,5.8 14,15.1 24.2,5.8" fill="none" stroke="#000" stroke-width="2.2"/></svg>
<div style="left:959px;top:1164px;width:136px;height:38px;box-sizing:border-box;border:2px solid #767676;border-radius:3px;background:#fff"></div>
<div class="t s" style="left:968px;top:1168px;">Normal</div>
<svg style="left:1059px;top:1173.0px" width="30" height="20"><polyline points="4.300000000000001,5.8 14,15.1 24.2,5.8" fill="none" stroke="#000" stroke-width="2.2"/></svg>
<div style="left:1177px;top:1162px;width:341px;height:43px;box-sizing:border-box;border:2px solid #767676;border-radius:3px;background:#fff"></div>
<div class="t s" style="left:1185px;top:1168px;">42.0-80.0</div>
<div class="t s" style="left:1524px;top:1168px;color:#444444;">%</div>
<div style="left:39px;top:1250px;width:1818px;height:2px;background:#808080"></div>
<div class="t s" style="left:39px;top:1213px;color:#444444;">Lymphocytes</div>
<div style="left:371px;top:1207px;width:234px;height:43px;box-sizing:border-box;border:2px solid #767676;border-radius:3px;background:#fff"></div>
<div style="left:606px;top:1209px;width:74px;height:38px;box-sizing:border-box;border:2px solid #767676;border-radius:3px;background:#fff"></div>
<div class="t s" style="left:615px;top:1213px;">%</div>
<svg style="left:644px;top:1218.0px" width="30" height="20"><polyline points="4.300000000000001,5.8 14,15.1 24.2,5.8" fill="none" stroke="#000" stroke-width="2.2"/></svg>
<div style="left:959px;top:1209px;width:136px;height:38px;box-sizing:border-box;border:2px solid #767676;border-radius:3px;background:#fff"></div>
<div class="t s" style="left:968px;top:1213px;">Normal</div>
<svg style="left:1059px;top:1218.0px" width="30" height="20"><polyline points="4.300000000000001,5.8 14,15.1 24.2,5.8" fill="none" stroke="#000" stroke-width="2.2"/></svg>
<div style="left:1177px;top:1207px;width:341px;height:43px;box-sizing:border-box;border:2px solid #767676;border-radius:3px;background:#fff"></div>
<div class="t s" style="left:1185px;top:1213px;">20.0-50.0</div>
<div class="t s" style="left:1524px;top:1213px;color:#444444;">%</div>
<div style="left:39px;top:1295px;width:1818px;height:2px;background:#808080"></div>
<div class="t s" style="left:39px;top:1258px;color:#444444;">Monocytes</div>
<div style="left:371px;top:1252px;width:234px;height:43px;box-sizing:border-box;border:2px solid #767676;border-radius:3px;background:#fff"></div>
<div style="left:606px;top:1254px;width:74px;height:38px;box-sizing:border-box;border:2px solid #767676;border-radius:3px;background:#fff"></div>
<div class="t s" style="left:615px;top:1258px;">%</div>
<svg style="left:644px;top:1263.0px" width="30" height="20"><polyline points="4.300000000000001,5.8 14,15.1 24.2,5.8" fill="none" stroke="#000" stroke-width="2.2"/></svg>
<div style="left:959px;top:1254px;width:136px;height:38px;box-sizing:border-box;border:2px solid #767676;border-radius:3px;background:#fff"></div>
<div class="t s" style="left:968px;top:1258px;">Normal</div>
<svg style="left:1059px;top:1263.0px" width="30" height="20"><polyline points="4.300000000000001,5.8 14,15.1 24.2,5.8" fill="none" stroke="#000" stroke-width="2.2"/></svg>
<div style="left:1177px;top:1252px;width:341px;height:43px;box-sizing:border-box;border:2px solid #767676;border-radius:3px;background:#fff"></div>
<div class="t s" style="left:1185px;top:1258px;">0.0-12.0</div>
<div class="t s" style="left:1524px;top:1258px;color:#444444;">%</div>
<div style="left:39px;top:1340px;width:1818px;height:2px;background:#808080"></div>
<div class="t s" style="left:39px;top:1303px;color:#444444;">Eosinophils</div>
<div style="left:371px;top:1297px;width:234px;height:43px;box-sizing:border-box;border:2px solid #767676;border-radius:3px;background:#fff"></div>
<div style="left:606px;top:1299px;width:74px;height:38px;box-sizing:border-box;border:2px solid #767676;border-radius:3px;background:#fff"></div>
<div class="t s" style="left:615px;top:1303px;">%</div>
<svg style="left:644px;top:1308.0px" width="30" height="20"><polyline points="4.300000000000001,5.8 14,15.1 24.2,5.8" fill="none" stroke="#000" stroke-width="2.2"/></svg>
<div style="left:959px;top:1299px;width:136px;height:38px;box-sizing:border-box;border:2px solid #767676;border-radius:3px;background:#fff"></div>
<div class="t s" style="left:968px;top:1303px;">Normal</div>
<svg style="left:1059px;top:1308.0px" width="30" height="20"><polyline points="4.300000000000001,5.8 14,15.1 24.2,5.8" fill="none" stroke="#000" stroke-width="2.2"/></svg>
<div style="left:1177px;top:1297px;width:341px;height:43px;box-sizing:border-box;border:2px solid #767676;border-radius:3px;background:#fff"></div>
<div class="t s" style="left:1185px;top:1303px;">0.0-4.0</div>
<div class="t s" style="left:1524px;top:1303px;color:#444444;">%</div>
<div style="left:39px;top:1385px;width:1818px;height:2px;background:#808080"></div>
<div class="t s" style="left:39px;top:1348px;color:#444444;">Basophils</div>
<div style="left:371px;top:1342px;width:234px;height:43px;box-sizing:border-box;border:2px solid #767676;border-radius:3px;background:#fff"></div>
<div style="left:606px;top:1344px;width:74px;height:38px;box-sizing:border-box;border:2px solid #767676;border-radius:3px;background:#fff"></div>
<div class="t s" style="left:615px;top:1348px;">%</div>
<svg style="left:644px;top:1353.0px" width="30" height="20"><polyline points="4.300000000000001,5.8 14,15.1 24.2,5.8" fill="none" stroke="#000" stroke-width="2.2"/></svg>
<div style="left:959px;top:1344px;width:136px;height:38px;box-sizing:border-box;border:2px solid #767676;border-radius:3px;background:#fff"></div>
<div class="t s" style="left:968px;top:1348px;">Normal</div>
<svg style="left:1059px;top:1353.0px" width="30" height="20"><polyline points="4.300000000000001,5.8 14,15.1 24.2,5.8" fill="none" stroke="#000" stroke-width="2.2"/></svg>
<div style="left:1177px;top:1342px;width:341px;height:43px;box-sizing:border-box;border:2px solid #767676;border-radius:3px;background:#fff"></div>
<div class="t s" style="left:1185px;top:1348px;">0.0-2.0</div>
<div class="t s" style="left:1524px;top:1348px;color:#444444;">%</div>
<div style="left:39px;top:1430px;width:1818px;height:2px;background:#808080"></div>
<div class="t s" style="left:39px;top:1393px;color:#444444;">Neutrophil (Abs)</div>
<div style="left:371px;top:1387px;width:234px;height:43px;box-sizing:border-box;border:2px solid #767676;border-radius:3px;background:#fff"></div>
<div style="left:606px;top:1389px;width:128px;height:38px;box-sizing:border-box;border:2px solid #767676;border-radius:3px;background:#fff"></div>
<div class="t s" style="left:615px;top:1393px;">TH/UL</div>
<svg style="left:698px;top:1398.0px" width="30" height="20"><polyline points="4.300000000000001,5.8 14,15.1 24.2,5.8" fill="none" stroke="#000" stroke-width="2.2"/></svg>
<div style="left:959px;top:1389px;width:136px;height:38px;box-sizing:border-box;border:2px solid #767676;border-radius:3px;background:#fff"></div>
<div class="t s" style="left:968px;top:1393px;">Normal</div>
<svg style="left:1059px;top:1398.0px" width="30" height="20"><polyline points="4.300000000000001,5.8 14,15.1 24.2,5.8" fill="none" stroke="#000" stroke-width="2.2"/></svg>
<div style="left:1177px;top:1387px;width:341px;height:43px;box-sizing:border-box;border:2px solid #767676;border-radius:3px;background:#fff"></div>
<div class="t s" style="left:1185px;top:1393px;">1.8-8.0</div>
<div class="t s" style="left:1524px;top:1393px;color:#444444;">TH/UL</div>
<div style="left:39px;top:1475px;width:1818px;height:2px;background:#808080"></div>
<div class="t s" style="left:39px;top:1438px;color:#444444;">Lymphocyte (Abs)</div>
<div style="left:371px;top:1432px;width:234px;height:43px;box-sizing:border-box;border:2px solid #767676;border-radius:3px;background:#fff"></div>
<div style="left:606px;top:1434px;width:128px;height:38px;box-sizing:border-box;border:2px solid #767676;border-radius:3px;background:#fff"></div>
<div class="t s" style="left:615px;top:1438px;">TH/UL</div>
<svg style="left:698px;top:1443.0px" width="30" height="20"><polyline points="4.300000000000001,5.8 14,15.1 24.2,5.8" fill="none" stroke="#000" stroke-width="2.2"/></svg>
<div style="left:959px;top:1434px;width:136px;height:38px;box-sizing:border-box;border:2px solid #767676;border-radius:3px;background:#fff"></div>
<div class="t s" style="left:968px;top:1438px;">Normal</div>
<svg style="left:1059px;top:1443.0px" width="30" height="20"><polyline points="4.300000000000001,5.8 14,15.1 24.2,5.8" fill="none" stroke="#000" stroke-width="2.2"/></svg>
<div style="left:1177px;top:1432px;width:341px;height:43px;box-sizing:border-box;border:2px solid #767676;border-radius:3px;background:#fff"></div>
<div class="t s" style="left:1185px;top:1438px;">0.90-5.00</div>
<div class="t s" style="left:1524px;top:1438px;color:#444444;">TH/UL</div>
<div style="left:39px;top:1520px;width:1818px;height:2px;background:#808080"></div>
<div class="t s" style="left:39px;top:1483px;color:#444444;">Monocyte (Abs)</div>
<div style="left:371px;top:1477px;width:234px;height:43px;box-sizing:border-box;border:2px solid #767676;border-radius:3px;background:#fff"></div>
<div style="left:606px;top:1479px;width:128px;height:38px;box-sizing:border-box;border:2px solid #767676;border-radius:3px;background:#fff"></div>
<div class="t s" style="left:615px;top:1483px;">TH/UL</div>
<svg style="left:698px;top:1488.0px" width="30" height="20"><polyline points="4.300000000000001,5.8 14,15.1 24.2,5.8" fill="none" stroke="#000" stroke-width="2.2"/></svg>
<div style="left:959px;top:1479px;width:136px;height:38px;box-sizing:border-box;border:2px solid #767676;border-radius:3px;background:#fff"></div>
<div class="t s" style="left:968px;top:1483px;">Normal</div>
<svg style="left:1059px;top:1488.0px" width="30" height="20"><polyline points="4.300000000000001,5.8 14,15.1 24.2,5.8" fill="none" stroke="#000" stroke-width="2.2"/></svg>
<div style="left:1177px;top:1477px;width:341px;height:43px;box-sizing:border-box;border:2px solid #767676;border-radius:3px;background:#fff"></div>
<div class="t s" style="left:1185px;top:1483px;">0.0-1.0</div>
<div class="t s" style="left:1524px;top:1483px;color:#444444;">TH/UL</div>
<div style="left:39px;top:1565px;width:1818px;height:2px;background:#808080"></div>
<div class="t s" style="left:39px;top:1528px;color:#444444;">Eosinophils (Abs)</div>
<div style="left:371px;top:1522px;width:234px;height:43px;box-sizing:border-box;border:2px solid #767676;border-radius:3px;background:#fff"></div>
<div style="left:606px;top:1524px;width:128px;height:38px;box-sizing:border-box;border:2px solid #767676;border-radius:3px;background:#fff"></div>
<div class="t s" style="left:615px;top:1528px;">TH/UL</div>
<svg style="left:698px;top:1533.0px" width="30" height="20"><polyline points="4.300000000000001,5.8 14,15.1 24.2,5.8" fill="none" stroke="#000" stroke-width="2.2"/></svg>
<div style="left:959px;top:1524px;width:136px;height:38px;box-sizing:border-box;border:2px solid #767676;border-radius:3px;background:#fff"></div>
<div class="t s" style="left:968px;top:1528px;">Normal</div>
<svg style="left:1059px;top:1533.0px" width="30" height="20"><polyline points="4.300000000000001,5.8 14,15.1 24.2,5.8" fill="none" stroke="#000" stroke-width="2.2"/></svg>
<div style="left:1177px;top:1522px;width:341px;height:43px;box-sizing:border-box;border:2px solid #767676;border-radius:3px;background:#fff"></div>
<div class="t s" style="left:1185px;top:1528px;">0.00-0.50</div>
<div class="t s" style="left:1524px;top:1528px;color:#444444;">TH/UL</div>
<div class="t s" style="left:39px;top:1573px;color:#444444;">Basophil (Abs)</div>
<div style="left:371px;top:1567px;width:234px;height:43px;box-sizing:border-box;border:2px solid #767676;border-radius:3px;background:#fff"></div>
<div style="left:606px;top:1569px;width:128px;height:38px;box-sizing:border-box;border:2px solid #767676;border-radius:3px;background:#fff"></div>
<div class="t s" style="left:615px;top:1573px;">TH/UL</div>
<svg style="left:698px;top:1578.0px" width="30" height="20"><polyline points="4.300000000000001,5.8 14,15.1 24.2,5.8" fill="none" stroke="#000" stroke-width="2.2"/></svg>
<div style="left:959px;top:1569px;width:136px;height:38px;box-sizing:border-box;border:2px solid #767676;border-radius:3px;background:#fff"></div>
<div class="t s" style="left:968px;top:1573px;">Normal</div>
<svg style="left:1059px;top:1578.0px" width="30" height="20"><polyline points="4.300000000000001,5.8 14,15.1 24.2,5.8" fill="none" stroke="#000" stroke-width="2.2"/></svg>
<div style="left:1177px;top:1567px;width:341px;height:43px;box-sizing:border-box;border:2px solid #767676;border-radius:3px;background:#fff"></div>
<div class="t s" style="left:1185px;top:1573px;">0.00-0.20</div>
<div class="t s" style="left:1524px;top:1573px;color:#444444;">TH/UL</div>
<div style="left:559px;top:1634px;width:741px;height:43px;box-sizing:border-box;border-style:solid;border-width:4px;border-color:#232323 #767676 #767676 #232323;background:#fff"></div>
<svg style="left:1285px;top:1662px" width="11" height="11"><path d="M11 0 L11 11 L0 11 Z" fill="#b4b4b4"/></svg>
<svg style="left:1314.9px;top:1641.9px" width="24" height="24" viewBox="0 0 24 24"><circle cx="12" cy="12" r="11.9" fill="#5b5a53"/><path d="M7.9 8.9 Q9.3 5.8 12.1 5.8 Q16.1 5.8 16.1 9.0 Q16.1 11.1 13.6 12.2 Q12 12.9 12 15.0" fill="none" stroke="#e6e2d7" stroke-width="4.0"/><rect x="9.9" y="16.1" width="4.2" height="4.1" fill="#e6e2d7"/></svg>
<div style="left:830px;top:1693px;width:114px;height:43px;box-sizing:border-box;border:2px solid #767676;border-radius:4px;background:#efefef"></div>
<div class="t s" style="left:846.54px;top:1699px;">Submit</div>
<div style="left:952px;top:1693px;width:115px;height:43px;box-sizing:border-box;border:2px solid #767676;border-radius:4px;background:#efefef"></div>
<div class="t s" style="left:969.03px;top:1699px;">Cancel</div>
</body></html>
